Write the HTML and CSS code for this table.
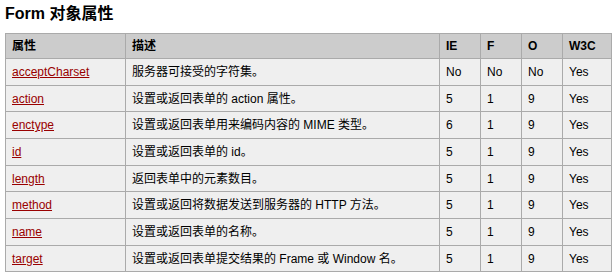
FILE: index.html
```html
<!DOCTYPE html>
<html>
<head>
<meta charset="utf-8">
<link rel="stylesheet" href="styles.css">
</head>
<body>
<h2 class="title">Form 对象属性</h2>
<table class="dataintable">
  <colgroup>
    <col class="c-name"><col class="c-desc"><col class="c-ie"><col class="c-f"><col class="c-o"><col class="c-w3c">
  </colgroup>
  <tr><th>属性</th><th>描述</th><th>IE</th><th>F</th><th>O</th><th>W3C</th></tr>
  <tr><td><a href="#">acceptCharset</a></td><td>服务器可接受的字符集。</td><td>No</td><td>No</td><td>No</td><td>Yes</td></tr>
  <tr><td><a href="#">action</a></td><td>设置或返回表单的 action 属性。</td><td>5</td><td>1</td><td>9</td><td>Yes</td></tr>
  <tr><td><a href="#">enctype</a></td><td>设置或返回表单用来编码内容的 MIME 类型。</td><td>6</td><td>1</td><td>9</td><td>Yes</td></tr>
  <tr><td><a href="#">id</a></td><td>设置或返回表单的 id。</td><td>5</td><td>1</td><td>9</td><td>Yes</td></tr>
  <tr><td><a href="#">length</a></td><td>返回表单中的元素数目。</td><td>5</td><td>1</td><td>9</td><td>Yes</td></tr>
  <tr><td><a href="#">method</a></td><td>设置或返回将数据发送到服务器的 HTTP 方法。</td><td>5</td><td>1</td><td>9</td><td>Yes</td></tr>
  <tr><td><a href="#">name</a></td><td>设置或返回表单的名称。</td><td>5</td><td>1</td><td>9</td><td>Yes</td></tr>
  <tr><td><a href="#">target</a></td><td>设置或返回表单提交结果的 Frame 或 Window 名。</td><td>5</td><td>1</td><td>9</td><td>Yes</td></tr>
</table>
</body>
</html>
```
FILE: styles.css
```css
html, body {
  margin: 0;
  padding: 0;
  background: #fff;
}
body {
  padding: 0 5px;
  font-family: "Liberation Sans", Arial, "Noto Sans CJK SC", sans-serif;
  color: #000;
}
.title {
  margin: 4px 0 9px 0;
  font-size: 16px;
  line-height: 20px;
  font-weight: bold;
  color: #000;
}
.dataintable {
  width: 606px;
  border-collapse: collapse;
  table-layout: fixed;
  border: 1px solid #aaa;
  font-size: 12px;
}
.c-name { width: 120px; }
.c-desc { width: 314px; }
.c-ie { width: 41px; }
.c-f { width: 41px; }
.c-o { width: 41px; }
.c-w3c { width: 49px; }
.dataintable th {
  background: #ccc;
  border: 1px solid #aaa;
  text-align: left;
  font-weight: bold;
  padding: 5px 6px 5px 6px;
  line-height: 14px;
  color: #000;
}
.dataintable td {
  background: #efefef;
  border: 1px solid #aaa;
  padding: 7px 6px 5px 6px;
  line-height: 13.67px;
  color: #000;
  white-space: nowrap;
}
.dataintable a {
  color: #900;
  text-decoration: underline;
}
```
